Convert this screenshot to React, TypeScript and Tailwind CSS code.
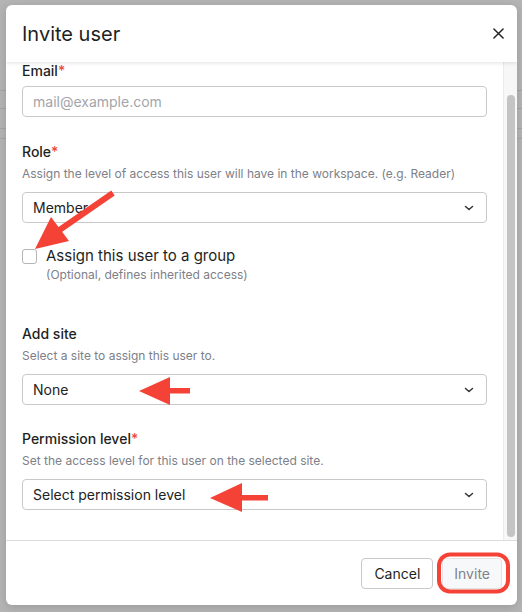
import React from "react";

function Chevron() {
  return (
    <svg width="10" height="6" viewBox="0 0 10 6" fill="none" className="shrink-0">
      <path d="M1.5 1.5L5 4.5L8.5 1.5" stroke="#333" strokeWidth="1.5" strokeLinecap="round" strokeLinejoin="round" />
    </svg>
  );
}

function Select({ value }: { value: string }) {
  return (
    <div className="h-[31px] w-full border border-[#c9c9c9] rounded-[4px] flex items-center justify-between pl-[10px] pr-[12px] text-[14px] text-[#222]">
      <span>{value}</span>
      <Chevron />
    </div>
  );
}

function Label({ text, required, tight }: { text: string; required?: boolean; tight?: boolean }) {
  return (
    <div className={tight ? "text-[14px] leading-[17px] font-medium text-[#1e1f22]" : "text-[14px] leading-5 font-medium text-[#1e1f22]"}>
      {text}
      {required && <span className="text-[#ec4a3f]">*</span>}
    </div>
  );
}

function Hint({ text }: { text: string }) {
  return <div className="mt-1 text-[12px] leading-4 text-[#7d8088]">{text}</div>;
}

export default function App() {
  return (
    <div className="relative w-[522px] h-[612px] overflow-hidden bg-[#b4b4b4] font-['Inter',sans-serif]">
      {/* page behind the overlay */}
      <div className="flex flex-col pt-[90px]">
        <div className="h-[18px] border-t border-[#a6a6a6]" />
        <div className="h-[20px] border-t border-[#a6a6a6]" />
        <div className="h-[10px] border-t border-[#a6a6a6]" />
        <div className="h-[18px] border-t border-[#a6a6a6]" />
      </div>

      {/* dialog */}
      <div className="absolute left-[6px] top-[5px] w-[511px] h-[600px] bg-white rounded-[6px] flex flex-col overflow-hidden shadow-[0_2px_10px_rgba(0,0,0,0.15)]">
        <div className="relative z-10 h-[57px] shrink-0 flex items-center justify-between pl-4 pr-[13px] shadow-[0_1px_4px_rgba(0,0,0,0.12)]">
          <h2 className="text-[20px] font-normal text-[#1e1f22]">Invite user</h2>
          <svg width="11" height="11" viewBox="0 0 12 12" fill="none">
            <path d="M1 1L11 11M11 1L1 11" stroke="#222" strokeWidth="1.6" strokeLinecap="round" />
          </svg>
        </div>

        <div className="flex-1 flex min-h-0">
          <div className="flex-1 overflow-hidden px-4">
            <Label text="Email" required tight />
            <div className="mt-[7px] h-[31px] border border-[#c9c9c9] rounded-[4px] flex items-center pl-[10px] text-[14px] text-[#a3a5aa]">
              mail@example.com
            </div>

            <div className="mt-[25px]">
              <Label text="Role" required />
              <Hint text="Assign the level of access this user will have in the workspace. (e.g. Reader)" />
              <div className="mt-[10px]">
                <Select value="Member" />
              </div>
            </div>

            <div className="mt-[23px] flex items-start gap-[9px]">
              <div className="mt-[3px] w-[15px] h-[15px] rounded-[3px] border border-[#b5b5b5] bg-white shrink-0" />
              <div>
                <div className="text-[15px] leading-5 text-[#1e1f22]">Assign this user to a group</div>
                <div className="mt-[1px] text-[12px] leading-4 text-[#7d8088]">(Optional, defines inherited access)</div>
              </div>
            </div>

            <div className="mt-[41px]">
              <Label text="Add site" />
              <Hint text="Select a site to assign this user to." />
              <div className="mt-[10px]">
                <Select value="None" />
              </div>
            </div>

            <div className="mt-[24px]">
              <Label text="Permission level" required />
              <Hint text="Set the access level for this user on the selected site." />
              <div className="mt-[10px]">
                <Select value="Select permission level" />
              </div>
            </div>
          </div>
          <div className="w-[14px] shrink-0 bg-[#f7f7f7] border-l border-[#ececec] pt-[33px] pb-[3px] pl-[3px]">
            <div className="w-2 h-full rounded-full bg-[#c4c4c4]" />
          </div>
        </div>

        <div className="h-[65px] shrink-0 border-t border-[#dcdcdc] flex items-center justify-end gap-[9px] pr-[15px]">
          <button className="h-[31px] px-3 rounded-[4px] border border-[#c9c9c9] bg-white text-[14px] text-[#1e1f22]">
            Cancel
          </button>
          <button className="h-[31px] px-[11px] rounded-[4px] border border-[#e3e3e6] bg-[#f7f8fa] text-[14px] text-[#808289]">
            Invite
          </button>
        </div>
      </div>

      {/* annotation arrows */}
      <svg className="absolute inset-0 pointer-events-none" width="522" height="612" viewBox="0 0 522 612">
        <line x1="113" y1="193" x2="58" y2="231" stroke="#f44336" strokeWidth="6" />
        <polygon points="35,249 51,217 69,241" fill="#f44336" />
        <rect x="166" y="388" width="24" height="5.5" fill="#f44336" />
        <polygon points="139,391 170,377 170,405" fill="#f44336" />
        <rect x="238" y="495" width="30" height="5.5" fill="#f44336" />
        <polygon points="210,498 242,483 242,512" fill="#f44336" />
        <rect x="439" y="554.5" width="69" height="37" rx="11" fill="none" stroke="#f44336" strokeWidth="4" />
      </svg>
    </div>
  );
}
